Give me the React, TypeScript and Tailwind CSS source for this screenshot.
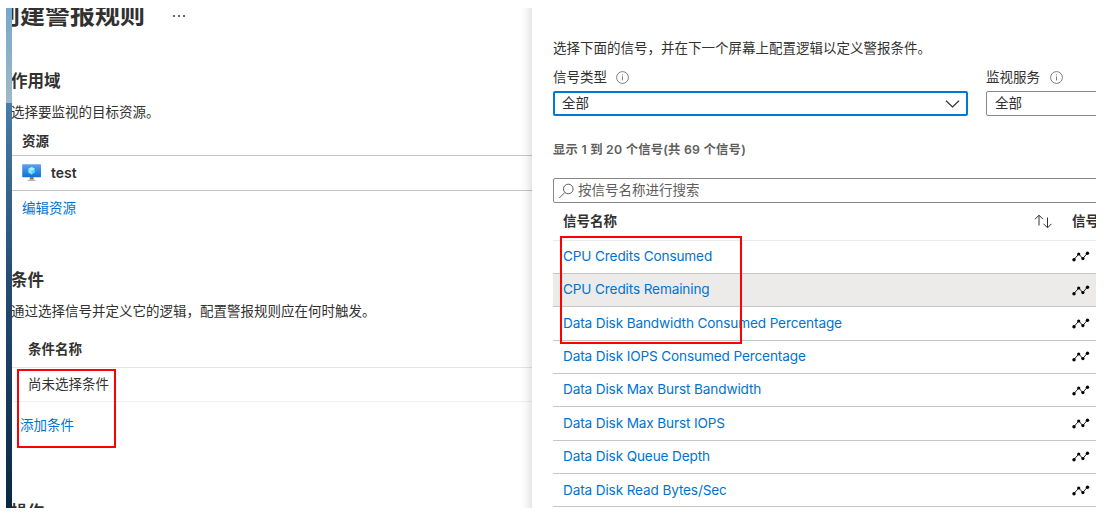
import React from "react";

const signals = [
  "CPU Credits Consumed",
  "CPU Credits Remaining",
  "Data Disk Bandwidth Consumed Percentage",
  "Data Disk IOPS Consumed Percentage",
  "Data Disk Max Burst Bandwidth",
  "Data Disk Max Burst IOPS",
  "Data Disk Queue Depth",
  "Data Disk Read Bytes/Sec",
];

function InfoIcon() {
  return (
    <svg className="h-[13px] w-[13px]" viewBox="0 0 13 13" fill="none" stroke="#605e5c" strokeWidth="0.8">
      <circle cx="6.5" cy="6.5" r="5.9" />
      <path d="M6.5 5.4v4" />
      <path d="M6.5 3.3v1" />
    </svg>
  );
}

function MonitorIcon() {
  return (
    <svg className="h-[18px] w-[20px]" viewBox="0 0 20 18">
      <defs>
        <linearGradient id="screen" x1="0" y1="0" x2="0" y2="1">
          <stop offset="0" stopColor="#5ea0ef" />
          <stop offset="1" stopColor="#0f72d4" />
        </linearGradient>
      </defs>
      <rect x="0.2" y="0.2" width="18.8" height="13" rx="0.6" fill="url(#screen)" />
      <path d="M8 13.2h3.400c0 2 .4 2.500 2.300 3.200v.6H5.500v-.6c2.100-.7 2.500-1.200 2.500-3.200z" fill="#b3b3b3" />
      <path d="M8 13.200h3.400l.2 1.800H7.800z" fill="#707070" />
      <path d="M9.700 3l3.200 1.800v3.700l-3.200 1.900-3.200-1.900V4.800z" fill="#50d8f6" />
      <path d="M9.700 3l3.200 1.800-3.200 1.900-3.200-1.900z" fill="#b5edff" />
      <path d="M9.700 6.700v3.700l-3.200-1.900V4.800z" fill="#8ce4fc" />
    </svg>
  );
}

function MetricIcon() {
  return (
    <svg className="h-[11px] w-[18px]" viewBox="0 0 18 11">
      <path d="M2 8.500L6.800 3l4 4.600 4.600-5.500" fill="none" stroke="#222" strokeWidth="1" />
      <g fill="#000">
        <circle cx="2" cy="8.700" r="1.700" />
        <circle cx="6.700" cy="3" r="1.600" />
        <circle cx="10.900" cy="7.600" r="1.600" />
        <circle cx="15.500" cy="2.200" r="1.700" />
      </g>
    </svg>
  );
}

function ScopePanel() {
  return (
    <section className="relative flex h-[500px] w-[520px] shrink-0 flex-col overflow-hidden">
      <div className="-mt-[10px] flex h-[34px] shrink-0 items-center">
        <h1 className="-ml-[17px] w-[150px] shrink-0 text-[25px] leading-[34px] font-bold">创建警报规则</h1>
        <div className="ml-[28px] mt-[1px] flex gap-[3px]">
          <i className="h-[2px] w-[2px] rounded-full bg-[#323130]" />
          <i className="h-[2px] w-[2px] rounded-full bg-[#323130]" />
          <i className="h-[2px] w-[2px] rounded-full bg-[#323130]" />
        </div>
      </div>
      <h2 className="mt-[37px] -ml-px h-[24px] shrink-0 text-[16.500px] leading-[24px] font-semibold">作用域</h2>
      <p className="mt-[9px] -ml-px h-[20px] shrink-0 leading-[20px]">选择要监视的目标资源。</p>
      <div className="flex h-[34px] shrink-0 items-center border-b border-[#c8c6c4] pt-[6px] pl-[10px] font-semibold">资源</div>
      <div className="flex h-[34.500px] shrink-0 items-center gap-[9px] border-b border-[#c8c6c4] pl-[10px] text-[14px] font-semibold">
        <MonitorIcon />
        <span>test</span>
      </div>
      <a className="mt-[7.500px] h-[20px] shrink-0 pl-[10px] leading-[20px] text-[#0073d1]">编辑资源</a>
      <h2 className="mt-[50px] -ml-px h-[24px] shrink-0 text-[16.500px] leading-[24px] font-semibold">条件</h2>
      <p className="mt-[9px] -ml-px h-[20px] shrink-0 leading-[20px] whitespace-nowrap">通过选择信号并定义它的逻辑，配置警报规则应在何时触发。</p>
      <div className="mt-[11px] flex h-[36px] shrink-0 items-center border-b border-[#e5e4e3] pl-[16px] font-semibold">条件名称</div>
      <div className="flex h-[34px] shrink-0 items-center border-b border-[#f0efee] pl-[16px]">尚未选择条件</div>
      <a className="mt-[13px] h-[20px] shrink-0 pl-[8px] leading-[20px] text-[#0073d1]">添加条件</a>
      <h2 className="mt-[65px] -ml-px h-[24px] shrink-0 text-[16.500px] leading-[24px] font-semibold">操作</h2>
      <div className="absolute top-0 right-0 h-full w-[12px] bg-linear-to-r from-transparent via-black/3 to-black/10" />
      <div className="absolute top-[361px] left-[5px] h-[79px] w-[99px] border-2 border-[#ff0000]" />
    </section>
  );
}

function SignalPanel() {
  return (
    <section className="relative flex h-[500px] w-[564px] shrink-0 flex-col overflow-hidden bg-white pl-[21px]">
      <p className="mt-[30px] h-[20px] shrink-0 leading-[20px]">选择下面的信号，并在下一个屏幕上配置逻辑以定义警报条件。</p>
      <div className="mt-[9px] flex shrink-0 gap-[18px]">
        <div className="w-[415px] shrink-0">
          <div className="flex h-[20px] items-center gap-[9px]">
            <span>信号类型</span>
            <InfoIcon />
          </div>
          <div className="mt-[4px] flex h-[25px] items-center justify-between rounded-[2px] border-2 border-[#0078d4] pr-[6px] pl-[7px]">
            <span>全部</span>
            <svg className="h-[8px] w-[15px]" viewBox="0 0 15 8" fill="none" stroke="#323130" strokeWidth="1.200">
              <path d="M1 .8l6.500 6.200L14 .8" />
            </svg>
          </div>
        </div>
        <div className="w-[415px] shrink-0">
          <div className="flex h-[20px] items-center gap-[10px]">
            <span>监视服务</span>
            <InfoIcon />
          </div>
          <div className="mt-[4px] flex h-[25px] items-center rounded-[2px] border border-[#8a8886] pl-[8px]">全部</div>
        </div>
      </div>
      <p className="mt-[24px] h-[20px] shrink-0 text-[12.300px] leading-[20px] font-semibold tracking-[0.240px] text-[#605e5c]">显示 1 到 20 个信号(共 69 个信号)</p>
      <div className="mt-[18px] flex h-[25px] w-[600px] shrink-0 items-center gap-[4px] rounded-[2px] border border-[#8a8886] pl-[4px] text-[#605e5c]">
        <svg className="h-[16px] w-[16px]" viewBox="0 0 16 16" fill="none" stroke="#605e5c" strokeWidth="1">
          <circle cx="10.300" cy="6" r="4.800" />
          <path d="M6.900 9.400L1.300 15" />
        </svg>
        <span>按信号名称进行搜索</span>
      </div>
      <div className="flex h-[37.500px] shrink-0 items-center border-b border-[#edebe9] pl-[10px] font-semibold">
        <span className="w-[471px] shrink-0">信号名称</span>
        <svg className="h-[15px] w-[18px] shrink-0" viewBox="0 0 18 15" fill="none" stroke="#323130" strokeWidth="1">
          <path d="M5 11.500V1.500M1 5.200l4-4 4 4" />
          <path d="M13.500 3.500v10M9.500 9.800l4 4 4-4" />
        </svg>
        <span className="ml-[20px] w-[54px] shrink-0 whitespace-nowrap">信号类型</span>
      </div>
      <ul>
        {signals.map((name, i) => (
          <li
            key={name}
            className={`flex h-[33.360px] items-center border-b border-[#c8c6c4] pl-[10px] ${i === 1 ? "bg-[#edebe9]" : ""}`}
          >
            <a className="-mt-px w-[509px] shrink-0 text-[13.600px] tracking-[-0.130px] text-[#0073d1]">{name}</a>
            <MetricIcon />
          </li>
        ))}
      </ul>
      <div className="absolute top-[228px] left-[28px] h-[108px] w-[182px] border-2 border-[#ff0000]" />
    </section>
  );
}

export default function App() {
  return (
    <div className="h-[516px] w-[1116px] overflow-hidden bg-white pt-[8px] pl-[6px] font-['Inter','Noto_Sans_CJK_SC',sans-serif] text-[13.500px] text-[#323130]">
      <main className="flex h-[500px] w-[1090px] overflow-hidden">
        <div className="flex w-[6px] shrink-0 flex-col">
          <div className="h-[95px] bg-linear-to-b from-[#78a8c9] to-[#9fb9c8]" />
          <div className="flex-1 bg-linear-to-b from-[#467da8] via-[#244b72] via-45% to-[#082944]" />
        </div>
        <ScopePanel />
        <SignalPanel />
      </main>
    </div>
  );
}
